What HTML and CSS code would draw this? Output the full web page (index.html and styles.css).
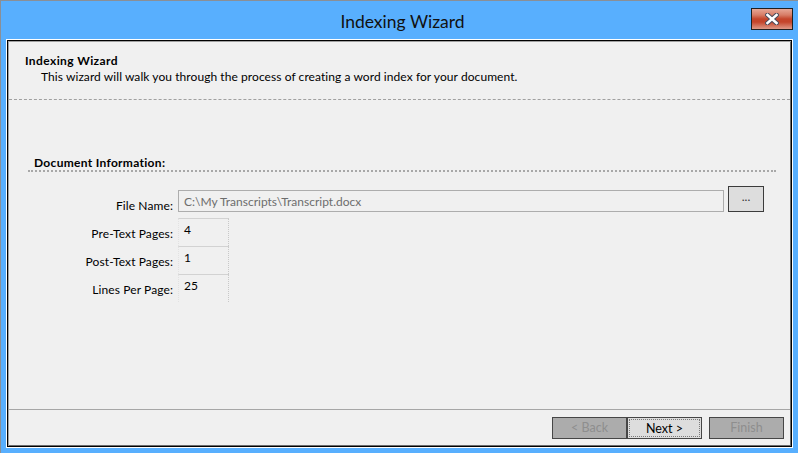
FILE: index.html
```html
<!DOCTYPE html>
<html>
<head>
<meta charset="utf-8">
<link rel="stylesheet" href="styles.css">
</head>
<body>
<div class="window">
  <div class="titlebar">
    <span class="title">Indexing Wizard</span>
    <div class="close">
      <svg width="14" height="12" viewBox="0 0 14 12">
        <path d="M2.5 2 L11.5 10 M11.5 2 L2.5 10" stroke="#4a4a5a" stroke-width="4.6" stroke-linecap="square" fill="none"/>
        <path d="M2.5 2 L11.5 10 M11.5 2 L2.5 10" stroke="#ffffff" stroke-width="2.6" stroke-linecap="square" fill="none"/>
      </svg>
    </div>
  </div>
  <div class="client">
    <div class="client-inner">
      <div class="header">
        <div class="h-title">Indexing Wizard</div>
        <div class="h-sub">This wizard will walk you through the process of creating a word index for your document.</div>
      </div>
      <div class="body">
        <div class="section"><span>Document Information:</span></div>
        <div class="form">
          <div class="row row-file">
            <div class="label">File Name:</div>
            <div class="field-file">C:\My Transcripts\Transcript.docx</div>
            <div class="browse">...</div>
          </div>
          <div class="row">
            <div class="label">Pre-Text Pages:</div>
            <div class="field-num">4</div>
          </div>
          <div class="row">
            <div class="label">Post-Text Pages:</div>
            <div class="field-num">1</div>
          </div>
          <div class="row">
            <div class="label">Lines Per Page:</div>
            <div class="field-num">25</div>
          </div>
        </div>
      </div>
      <div class="footer">
        <div class="btn disabled">&lt; Back</div>
        <div class="btn focused"><span>Next &gt;</span></div>
        <div class="btn disabled finish">Finish</div>
      </div>
    </div>
  </div>
</div>
</body>
</html>
```

FILE: styles.css
```css
* { box-sizing: border-box; }
html, body { margin: 0; padding: 0; }
body {
  font-family: "Lato", "Noto Sans", sans-serif;
  font-size: 12px;
  color: #000;
  background: #58affe;
}
.window {
  width: 798px;
  height: 453px;
  background: #58affe;
  border-top: 1px solid #8a8f96;
  border-left: 1px solid #8a8f96;
  display: flex;
  flex-direction: column;
}
.titlebar {
  height: 38px;
  position: relative;
  display: flex;
  justify-content: center;
  align-items: center;
}
.title {
  font-size: 17.5px;
  color: #111;
  margin-left: 6px;
  margin-top: 2px;
}
.close {
  position: absolute;
  left: 750px;
  top: 7px;
  width: 42px;
  height: 22px;
  border: 1px solid #202020;
  background: linear-gradient(#e6a796 0%, #d77d67 30%, #c4452b 50%, #c4452b 65%, #df9a88 100%);
  display: flex;
  align-items: center;
  justify-content: center;
}
.client {
  margin-left: 5px;
  width: 787px;
  height: 409px;
  border: 1px solid #ffffff;
}
.client-inner {
  height: 100%;
  border: 1px solid #000;
  box-shadow: inset 1px 1px 0 #a0a0a0, inset -1px -1px 0 #6a6a6a;
  background: #f0f0f0;
  padding: 1px;
  display: flex;
  flex-direction: column;
}
.header {
  height: 58px;
  padding: 11px 0 0 16px;
  line-height: 16px;
  border-bottom: 1px dashed #a0a0a0;
}
.h-title { font-weight: bold; letter-spacing: 0.4px; }
.h-sub { padding-left: 16px; letter-spacing: 0.07px; }
.body {
  flex: 1;
  padding-top: 55px;
}
.section {
  margin-left: 19px;
  width: 748px;
  height: 17px;
  line-height: 15px;
  border-bottom: 2px dotted #a8a8a8;
  padding-left: 6px;
  font-weight: bold;
  letter-spacing: 0.3px;
}
.form {
  margin-top: 18px;
  display: flex;
  flex-direction: column;
}
.row {
  display: flex;
  height: 28px;
  line-height: 16px;
}
.row-file {
  height: 22px;
  margin-bottom: 6px;
}
.label {
  width: 164px;
  text-align: right;
  padding-top: 8px;
  margin-right: 5px;
  letter-spacing: 0.1px;
}
.field-file {
  width: 546px;
  height: 22px;
  border: 1px solid #adadad;
  color: #6d6d6d;
  padding: 3px 0 0 5px;
}
.browse {
  width: 36px;
  height: 26px;
  margin-top: -4px;
  margin-left: 4px;
  border: 1px solid #3c3c3c;
  background: #dddddd;
  text-align: center;
  line-height: 20px;
  font-size: 12px;
  color: #333;
}
.field-num {
  width: 51px;
  height: 28px;
  border-top: 1px solid #d2d2d2;
  border-right: 1px dotted #c8c8c8;
  border-left: 1px dotted #e2e2e2;
  padding: 3px 0 0 5px;
}
.footer {
  height: 36px;
  border-top: 1px solid #a6a6a6;
  display: flex;
  justify-content: flex-end;
  padding: 7px 6px 0 0;
}
.btn {
  width: 75px;
  height: 22px;
  border: 1px solid #464646;
  text-align: center;
  line-height: 20px;
  font-size: 12.5px;
}
.btn.disabled {
  background: #acacac;
  color: #8e8e8e;
}
.btn.finish { margin-left: 7px; }
.btn.focused {
  background: #dddddd;
  color: #000;
  padding: 1px;
}
.btn.focused span {
  display: block;
  height: 18px;
  line-height: 18px;
  border: 1px dotted #7a7a7a;
}
```
